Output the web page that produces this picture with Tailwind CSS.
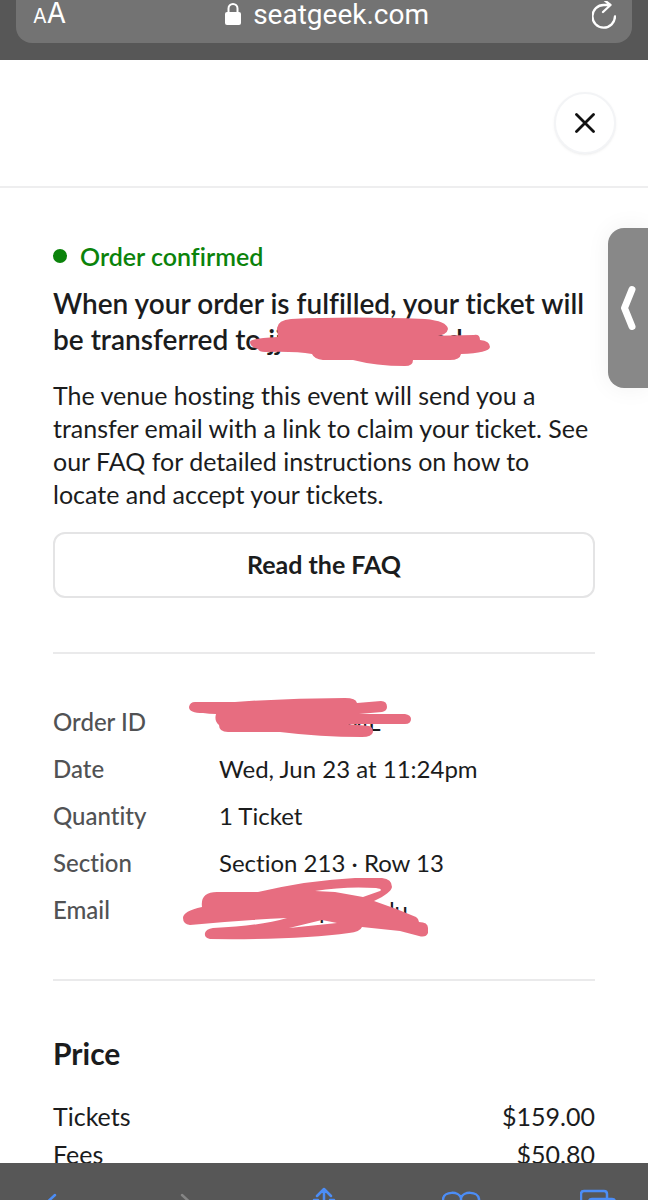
<!doctype html>
<html lang="en">

<head>
  <meta charset="UTF-8" />
  <meta name="viewport" content="width=device-width, initial-scale=1.0" />
  <title>Order confirmed</title>
  <script src="https://cdn.jsdelivr.net/npm/@tailwindcss/browser@4"></script>
</head>

<body class="bg-white font-[Lato,sans-serif] text-[#1b1c1d] [font-variant-ligatures:none]">
  <div class="relative flex h-screen flex-col overflow-hidden">

    <!-- address bar -->
    <div class="shrink-0 bg-[#575757] px-4 pb-[17px] font-[Inter,sans-serif] text-white">
      <div class="flex h-[43px] items-center justify-between rounded-b-2xl bg-[#737373] pr-4 pl-[17px] pb-[14px]">
        <button class="flex items-baseline leading-7" aria-label="Text size"><span class="text-[20px]">A</span><span class="text-[28px]">A</span></button>
        <div class="flex items-center gap-3 pr-1">
          <svg class="h-6 w-4" viewBox="0 0 16 24" fill="none">
            <rect x="0" y="9" width="16" height="13" rx="2" fill="#fff" />
            <path d="M3.500 10V5.500a4.500 4.500 0 0 1 9 0V10" stroke="#fff" stroke-width="2" />
          </svg>
          <span class="font-[Roboto,sans-serif] text-[28px] leading-7">seatgeek.com</span>
        </div>
        <button aria-label="Reload">
          <svg class="h-7 w-6" viewBox="0 0 24 28" fill="none" stroke="#fff" stroke-width="2.300" stroke-linecap="round" stroke-linejoin="round">
            <path d="M17 4H12a11.300 11.300 0 1 0 11 11.300M11 -2l7.500 6l-7.500 7" />
          </svg>
        </button>
      </div>
    </div>

    <main class="min-h-0 flex-1 overflow-hidden">
      <header class="flex h-32 items-center justify-end border-b-2 border-[#eeeeef] px-8">
        <button class="flex size-[62px] items-center justify-center rounded-full border-2 border-[#f3f4f6] bg-white shadow-sm shadow-black/5" aria-label="Close">
          <svg class="size-5" viewBox="0 0 20 20" stroke="#111" stroke-width="2.800" stroke-linecap="round">
            <path d="M1.500 1.500l17 17M18.500 1.500l-17 17" />
          </svg>
        </button>
      </header>

      <div class="px-[53px] pt-[52px] text-[25px]">
        <p class="flex items-center gap-[13px] leading-8 font-semibold text-[#0b830b]">
          <span class="size-[14px] rounded-full bg-[#0b830b]"></span>Order confirmed
        </p>

        <div class="relative mt-[13px]">
          <h1 class="text-[28px] leading-9 font-semibold whitespace-nowrap">When your order is fulfilled, your ticket will<br>be transferred to jj<span class="inline-block w-[150px]"></span>ed</h1>
          <svg class="absolute top-[30px] left-[192px] h-[55px] w-[250px]" viewBox="245 315 250 55" fill="#e76d80">
            <path d="M277 328Q278 320 291 319Q350 316 425 319Q447 321 448 329Q447 335 436 336H426L474 335Q480 334 480 340Q490 341 490 347Q489 353 461 354Q460 360 450 360H413Q413 366 405 366Q376 366 353 360H323Q314 359 312 354Q295 351 265 352Q259 352 258 349Q250 347 250 342Q251 338 278 337Z" />
          </svg>
        </div>

        <p class="mt-[22px] leading-[33px] whitespace-nowrap">The venue hosting this event will send you a<br>transfer email with a link to claim your ticket. See<br>our FAQ for detailed instructions on how to<br>locate and accept your tickets.</p>

        <button class="mt-[21px] h-[66px] w-full rounded-xl border-2 border-[#e4e4e5] font-bold">Read the FAQ</button>

        <hr class="mt-[54px] border-t-2 border-[#eaeaeb]">

        <dl class="mt-[53px] grid grid-cols-[166px_1fr] gap-y-[17px] text-2xl leading-[30px]">
          <dt class="font-medium text-[#515254]">Order ID</dt>
          <dd class="relative">
            <span class="inline-block w-[127px]"></span>ML
            <svg class="absolute -top-3 -left-[34px] h-[47px] w-[230px]" viewBox="185 695 230 47" fill="#e76d80">
              <path d="M195 702H235Q290 698 345 698Q356 698 357 703L381 701Q387 701 387 707Q387 711 382 712L359 714H405Q411 715 411 719Q411 724 405 724H347Q358 725 369 726Q373 727 373 732Q372 737 362 737Q320 737 280 732H228Q219 732 219 725Q214 721 216 714Q209 714 203 713Q189 713 189 707Q190 702 195 702Z" />
            </svg>
          </dd>
          <dt class="font-medium text-[#515254]">Date</dt>
          <dd>Wed, Jun 23 at 11:24pm</dd>
          <dt class="font-medium text-[#515254]">Quantity</dt>
          <dd>1 Ticket</dd>
          <dt class="font-medium text-[#515254]">Section</dt>
          <dd>Section 213 · Row 13</dd>
          <dt class="font-medium text-[#515254]">Email</dt>
          <dd class="relative">
            <span class="inline-block w-[100px]"></span>p<span class="inline-block w-[36px]"></span>edu
            <svg class="absolute -top-[21px] -left-[39px] h-[68px] w-[252px]" viewBox="180 874 252 68" fill="#e76d80" fill-rule="evenodd">
              <path d="M202 907Q200 892 217 892H258Q310 880 355 878H382Q392 879 392 887Q391 893 374 901Q395 908 416 917Q419 919 419 922Q428 922 428 928V933Q426 938 419 936L400 931L362 927Q360 932 349 933Q300 940 210 939Q204 938 205 933Q206 929 213 928Q260 926 287 918Q240 920 190 925Q183 924 183 918Q183 911 202 907ZM315 891Q345 886 376 888Q383 889 380 891L363 897L335 892ZM289 928L322 920L337 923Z" />
            </svg>
          </dd>
        </dl>

        <hr class="mt-[54px] border-t-2 border-[#eaeaeb]">

        <h2 class="mt-[54px] text-[30px] leading-9 font-bold">Price</h2>
        <dl class="mt-[26px] leading-[38px]">
          <div class="flex justify-between">
            <dt>Tickets</dt>
            <dd>$159.00</dd>
          </div>
          <div class="flex justify-between">
            <dt>Fees</dt>
            <dd>$50.80</dd>
          </div>
        </dl>
      </div>
    </main>

    <!-- drawer handle on the screen edge -->
    <button class="absolute top-[228px] right-0 flex h-40 w-10 items-center justify-center rounded-l-2xl bg-[#888] shadow-[0_0_24px_rgba(0,0,0,0.06)]" aria-label="Open drawer">
      <svg class="h-[46px] w-4" viewBox="0 0 16 46" fill="none" stroke="#fff" stroke-width="7" stroke-linecap="round" stroke-linejoin="round">
        <path d="M12 4.500L4.500 23L12 41.500" />
      </svg>
    </button>

    <!-- browser toolbar -->
    <nav class="flex h-[37px] shrink-0 items-end justify-between overflow-hidden bg-[#575757] px-7 text-[#4c8df6]">
      <button aria-label="Back">
        <svg class="block h-[15px] w-10" viewBox="0 0 40 15" fill="none" stroke="currentColor" stroke-width="2.500" stroke-linecap="round">
          <path d="M27 10L14 22" />
        </svg>
      </button>
      <button aria-label="Forward" class="text-[#858585]">
        <svg class="block h-[15px] w-10" viewBox="0 0 40 15" fill="none" stroke="currentColor" stroke-width="2.500" stroke-linecap="round">
          <path d="M16 10L29 22" />
        </svg>
      </button>
      <button aria-label="Share">
        <svg class="block h-[15px] w-10" viewBox="0 0 40 15" fill="none" stroke="currentColor" stroke-width="2.500" stroke-linecap="round" stroke-linejoin="round">
          <path d="M20 24V4M13 11L20 4L27 11M14 15H10V30M26 15H30V30" />
        </svg>
      </button>
      <button aria-label="Bookmarks">
        <svg class="block h-[15px] w-10" viewBox="0 0 40 15" fill="none" stroke="currentColor" stroke-width="2.500">
          <path d="M1 30V14C2 6 17 6 19 13C21 6 36 6 37 14V30M19 13V30" />
        </svg>
      </button>
      <button aria-label="Tabs">
        <svg class="block h-[15px] w-10" viewBox="0 0 40 15" fill="none" stroke="currentColor" stroke-width="2.500">
          <path d="M9 30H3Q1 30 1 27V9Q1 6 4 6H24Q27 6 27 9V14M9 30V17Q9 14 12 14H32Q35 14 35 17V30" />
        </svg>
      </button>
    </nav>
  </div>
</body>

</html>
